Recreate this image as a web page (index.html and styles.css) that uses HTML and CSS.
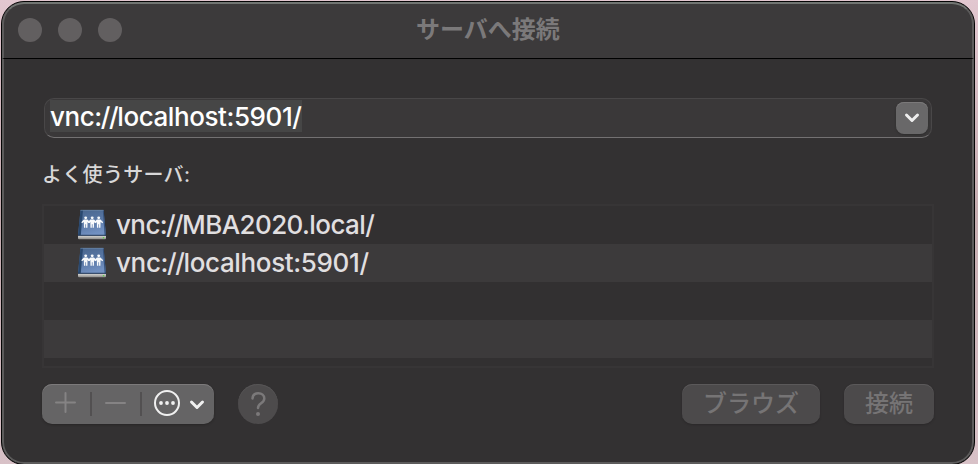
FILE: index.html
```html
<!DOCTYPE html>
<html lang="ja">
<head>
<meta charset="utf-8">
<title>サーバへ接続</title>
<link rel="stylesheet" href="styles.css">
</head>
<body>
<svg class="defs" width="0" height="0" aria-hidden="true">
  <defs>
    <linearGradient id="cover" x1="0" y1="0" x2="0.3" y2="1">
      <stop offset="0" stop-color="#48658c"/><stop offset="0.5" stop-color="#5775a2"/><stop offset="1" stop-color="#7291c2"/>
    </linearGradient>
    <linearGradient id="base" x1="0" y1="0" x2="0" y2="1">
      <stop offset="0" stop-color="#d6d5d2"/><stop offset="1" stop-color="#8c8b89"/>
    </linearGradient>
    <symbol id="person" viewBox="0 0 10 13">
      <circle cx="5" cy="1.8" r="1.6"/>
      <path d="M3 3.600h4l3 3.200-.8 1-2.100-1.400-.2 6.300H5.400V9h-.8v3.700H3.100l-.2-6.300L.8 7.800 0 6.800z"/>
    </symbol>
    <symbol id="server" viewBox="0 0 30 32">
      <path d="M3.500 1h23L29 27H1z" fill="url(#cover)"/>
      <path d="M3.500 1h2.500L3.800 26H1z" fill="#29486f"/>
      <path d="M25.800 1h.9L29 27h-1.300z" fill="#34517b"/>
      <path d="M3.500 1.300h23" stroke="#6f89a9" stroke-width=".7"/>
      <path d="M1 26.800h28v2.500q0 1-1 1H2q-1 0-1-1z" fill="url(#base)"/>
      <path d="M1 26.300h28" stroke="#263a56" stroke-width="1"/>
      <circle cx="26.500" cy="28.700" r=".8" fill="#55d544"/>
      <g fill="#f7f9fb">
        <use href="#person" x="4.200" y="6.700" width="9" height="12.800"/>
        <use href="#person" x="10.700" y="6.700" width="9" height="12.800"/>
        <use href="#person" x="17.200" y="6.700" width="9" height="12.800"/>
      </g>
    </symbol>
  </defs>
</svg>
<main class="window">
  <header class="titlebar">
    <div class="lights"><i></i><i></i><i></i></div>
    <h1>サーバへ接続</h1>
  </header>
  <section class="content">
    <div class="address">
      <span class="value">vnc<b>://</b>localhost:5901/</span>
      <button class="dropdown" aria-label="履歴"><svg width="16" height="12" viewBox="0 0 16 12"><path d="M2.500 3l5.500 5.500L13.500 3"/></svg></button>
    </div>
    <h2>よく使うサーバ:</h2>
    <ul class="servers">
      <li><svg width="30" height="32"><use href="#server"/></svg><span class="mba">vnc<b>://</b>MBA2020.local/</span></li>
      <li><svg width="30" height="32"><use href="#server"/></svg><span>vnc<b>://</b>localhost:5901/</span></li>
      <li></li>
      <li></li>
      <li></li>
    </ul>
    <footer class="actions">
      <div class="segments">
        <svg width="172" height="40" viewBox="0 0 172 40" fill="none" stroke-linecap="round">
          <path class="muted" d="M14 18.500h19M23.500 9v19M64 19h19"/>
          <path class="divider" d="M49 8v24M99 8v24"/>
          <circle class="bright" cx="125" cy="19" r="12"/>
          <g class="dots"><circle cx="119" cy="19" r="1.900"/><circle cx="125" cy="19" r="1.900"/><circle cx="131" cy="19" r="1.900"/></g>
          <path class="chevron" d="M149.500 18l5.500 5.500 5.500-5.500"/>
        </svg>
      </div>
      <button class="help" aria-label="ヘルプ"><svg width="40" height="40" viewBox="0 0 40 40"><path d="M14.500 14.500C14.700 11 17 9.300 20.300 9.300c3.500 0 6 2 6 5.200 0 5-6.300 4.700-6.300 9.500"/><circle cx="20" cy="30" r="2"/></svg></button>
      <button class="push browse">ブラウズ</button>
      <button class="push connect">接続</button>
    </footer>
  </section>
</main>
</body>
</html>
```

FILE: styles.css
```css
* { box-sizing: border-box; }
body {
  margin: 0;
  height: 464px;
  overflow: hidden;
  padding: 1px;
  background: linear-gradient(#e2c7d0, #c5acb0 45%, #d8c1c7);
  font-family: Inter, "Noto Sans CJK JP", sans-serif;
}
.defs { display: block; }
h1, h2, ul { margin: 0; padding: 0; }
button { border: 0; padding: 0; font: inherit; }
.window {
  width: 974px;
  height: 464px;
  border: 1px solid #050505;
  border-radius: 23px;
  background: #333132;
  box-shadow: inset 0 0 0 2px #5c5b5b;
  overflow: hidden;
}
.titlebar {
  display: grid;
  grid-template-columns: 1fr auto 1fr;
  align-items: center;
  height: 57px;
  padding: 0 14px 2px;
  border: 2px solid #5c5b5b;
  border-top-color: #717572;
  border-bottom: 1px solid #000;
  border-radius: 22px 22px 0 0;
  background: #3c3a3b;
}
.lights { display: flex; gap: 16px; }
.lights i { width: 24px; height: 24px; border-radius: 50%; background: #625f60; }
h1 { font-size: 24px; line-height: 36px; font-weight: 700; color: #7b797a; }
.content { padding: 39px 40px 0 40px; }
.address {
  display: flex;
  align-items: center;
  justify-content: space-between;
  width: 888px;
  height: 40px;
  margin-left: 2px;
  padding: 0 3px 0 5px;
  border: 1px solid #494748;
  border-bottom: 1px solid #737172;
  border-radius: 10px;
  background: #3a3839;
}
.value {
  height: 32px;
  line-height: 34px;
  margin-top: -4px;
  background: #464646;
  color: #fff;
  font-size: 26px;
  font-weight: 500;
  letter-spacing: -.42px;
  white-space: nowrap;
}
.value b, .servers b { font-weight: inherit; letter-spacing: -1.400px; }
.dropdown {
  display: grid;
  place-items: center;
  width: 32px;
  height: 32px;
  border-radius: 8px;
  background: #696869;
  box-shadow: inset 0 1px #7b797a, 0 1px 2px #2228;
}
.dropdown path { fill: none; stroke: #eee; stroke-width: 3px; stroke-linecap: round; stroke-linejoin: round; }
h2 { margin: 22px 0 0; font-size: 20px; line-height: 30px; font-weight: 500; letter-spacing: .3px; color: #d8d7d8; }
.servers {
  width: 892px;
  height: 164px;
  margin-top: 14px;
  border: 2px solid #373536;
  list-style: none;
  overflow: hidden;
  background: #323031;
}
.servers li { display: flex; align-items: center; height: 38px; padding-left: 33px; }
.servers li:nth-child(even) { background: #3c3a3b; }
.servers svg { flex: none; margin-top: -1px; }
.servers span { margin-left: 9px; font-size: 26px; font-weight: 450; line-height: 38px; letter-spacing: -.35px; color: #e0dfe0; }
.servers .mba { letter-spacing: -.6px; }
.servers .mba b { letter-spacing: -1.600px; }
.actions { display: flex; align-items: center; margin-top: 16px; }
.segments, .push { border-radius: 10px; box-shadow: inset 0 1px #7c7a7b, 0 1px 2px #1e1c1d88; }
.segments { width: 172px; height: 40px; overflow: hidden; background: #656465; }
.segments svg { display: block; }
.muted { stroke: #858384; stroke-width: 2; }
.divider { stroke: #525051; stroke-width: 2; stroke-linecap: butt; }
.bright { stroke: #f0f0f0; stroke-width: 2; }
.dots { fill: #f0f0f0; }
.chevron { stroke: #f0f0f0; stroke-width: 3; stroke-linejoin: round; }
.help { width: 40px; height: 40px; margin-left: 24px; border-radius: 50%; background: #4d4b4c; box-shadow: inset 0 1px #575556; }
.help svg { display: block; }
.help path { fill: none; stroke: #7b797a; stroke-width: 2.500; stroke-linecap: round; }
.help circle { fill: #7b797a; }
.push { height: 40px; padding-bottom: 1px; background: #4c4a4b; box-shadow: inset 0 1px #5b595a, 0 1px 2px #1e1c1d66; font-size: 24px; line-height: 38px; font-weight: 500; color: #767475; }
.browse { width: 138px; margin-left: auto; }
.connect { width: 90px; margin-left: 24px; }
```
